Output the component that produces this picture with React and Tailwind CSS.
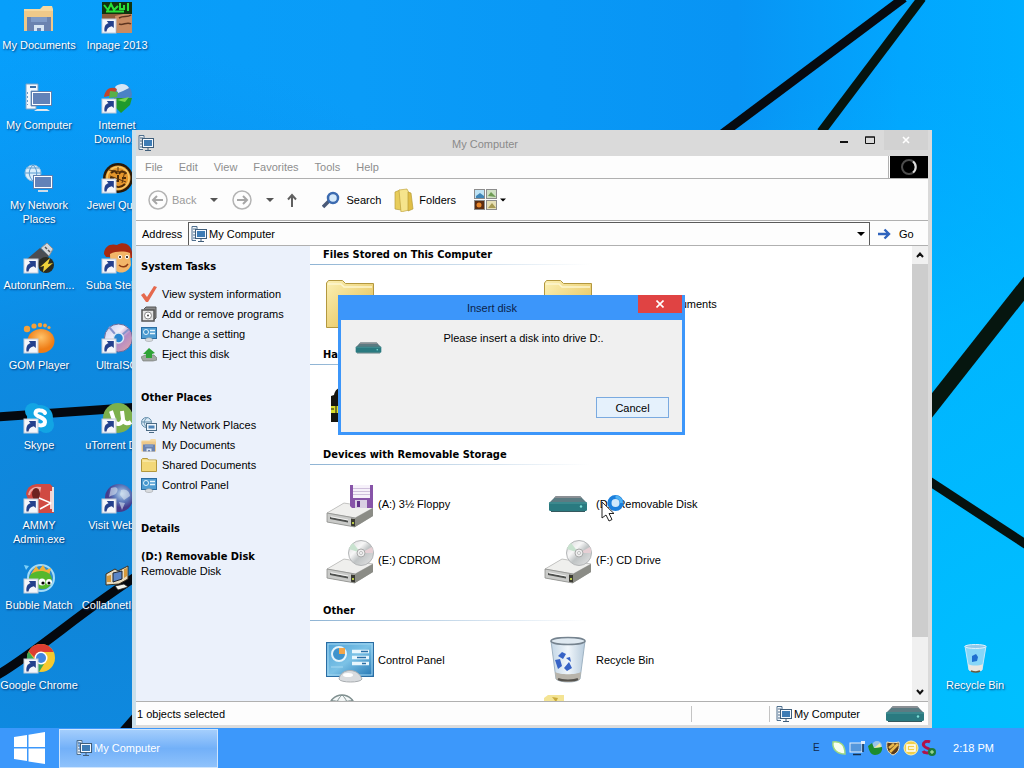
import React from "react";

const UI = "font-['Liberation_Sans',Arial,sans-serif]";
const BOLD = "font-['DejaVu_Sans_Condensed','DejaVu_Sans',sans-serif] font-bold";

/* ---------- shared drawings ---------- */

function Shortcut() {
  return (
    <g>
      <rect x="1" y="17" width="14" height="14" fill="#f4f6fa" stroke="#c3cbd8" strokeWidth="1" />
      <path d="M3.500 29.500c-.6-5 1-7.600 4-8.300l-1.700-2.200h7v7l-2-1.700c-3.300.6-4.800 2.200-5.300 5.200z" fill="#23408c" />
    </g>
  );
}

function ComputerIcon({ className }) {
  return (
    <svg viewBox="0 0 16 16" className={className} aria-hidden="true">
      <path d="M1 .5h5v3M1 .5v14h4" fill="#eef4fa" stroke="#4f6f8d" strokeWidth="1" />
      <path d="M2 3h3M2 6h2M2 9h2M2 12h2" stroke="#4f6f8d" strokeWidth="1" />
      <rect x="4.500" y="3.500" width="11" height="9" fill="#f4f9ff" stroke="#3f5d79" />
      <rect x="6" y="5" width="8" height="6" fill="#3e7cb5" />
      <path d="M10 13v2M7 15.500h6" stroke="#3f5d79" />
    </svg>
  );
}

function DesktopComputer() {
  return (
    <svg viewBox="0 0 32 32" className="size-8" aria-hidden="true">
      <path d="M3 2h12v7H8v15h5v3H3z" fill="#f3f8fd" stroke="#7aa2c8" strokeWidth="1" />
      <path d="M7 5h6" stroke="#3a6ea5" strokeWidth="2" />
      <path d="M4.500 10v13" stroke="#6d9cc9" strokeWidth="1" strokeDasharray="2 2" />
      <path d="M14 27h10l3 2H11z" fill="#dfe7ee" />
      <rect x="8" y="9" width="21" height="15" fill="#5d7fb0" />
      <rect x="9.500" y="10.500" width="18" height="12" fill="#6282b8" stroke="#fff" />
    </svg>
  );
}

function DesktopNetwork() {
  return (
    <svg viewBox="0 0 32 32" className="size-8" aria-hidden="true">
      <circle cx="10" cy="11" r="8" fill="#d8eefc" stroke="#8fbde0" />
      <path d="M2 11h16M10 3c-5 5-5 11 0 16M10 3c5 5 5 11 0 16M4 6h12" fill="none" stroke="#5a9bd0" />
      <rect x="10" y="13" width="20" height="14" fill="#5d7fb0" />
      <rect x="11.500" y="14.500" width="17" height="11" fill="#6282b8" stroke="#fff" />
      <path d="M15 29h10" stroke="#cddbe7" strokeWidth="2" />
    </svg>
  );
}

function DocsIcon({ className }) {
  return (
    <svg viewBox="0 0 32 32" className={className} aria-hidden="true">
      <path d="M1 7h16l3-3h9l1 3v6H1z" fill="#f6d9a0" />
      <path d="M1 9h29v20H1z" fill="#eec98a" />
      <path d="M4 15h24v14H4z" fill="#6b83b0" />
      <path d="M8 15h16v5H8z" fill="#7f9ac6" />
      <path d="M11 23h10v6h-3v-3h-4v3h-3z" fill="#d8e6f4" />
    </svg>
  );
}

function FolderIcon({ className }) {
  return (
    <svg viewBox="0 0 48 48" className={className} aria-hidden="true">
      <defs>
        <linearGradient id="folder" x1="0" y1="0" x2="1" y2="1">
          <stop offset="0" stopColor="#fbf0b4" />
          <stop offset="1" stopColor="#e2bb4c" />
        </linearGradient>
      </defs>
      <path d="M.5 47.500V3l2-2.500h14l3 3H47.500v44z" fill="url(#folder)" stroke="#b3983f" />
      <path d="M2 4h13l3 3h28" fill="none" stroke="#fdf6d0" strokeWidth="1.500" />
    </svg>
  );
}

function ControlPanelIcon({ className }) {
  return (
    <svg viewBox="0 0 48 48" className={className} aria-hidden="true">
      <defs>
        <linearGradient id="cpl" x1="0" y1="0" x2="1" y2="1">
          <stop offset="0" stopColor="#4fa3d8" />
          <stop offset=".5" stopColor="#7cc2e6" />
          <stop offset="1" stopColor="#2376b4" />
        </linearGradient>
      </defs>
      <rect x=".5" y="6.500" width="47" height="34" fill="url(#cpl)" stroke="#2a6da3" />
      <rect x="2" y="8" width="44" height="31" fill="none" stroke="#a6d8f2" />
      <circle cx="13" cy="18" r="7" fill="#3f93cc" stroke="#e3f4fc" strokeWidth="2" />
      <path d="M13 18v-6h6v6z" fill="#f3a548" />
      <path d="M26 15.500h17M26 21.500h17M26 27.500h17" stroke="#e8f6fd" strokeWidth="3.500" />
      <path d="M35 15.500h7M31 21.500h9M36 27.500h4" stroke="#2b6ea6" strokeWidth="1.500" />
      <path d="M5 31h12" stroke="#a6d8f2" />
      <path d="M13 43c1-5 5-8.500 11-8.500S34 38 36 43c-1 4-22 4-23 0z" fill="#d9dcdf" stroke="#a9adb1" />
      <ellipse cx="22" cy="39" rx="5" ry="2" fill="#fff" />
    </svg>
  );
}

function DriveBase() {
  return (
    <g>
      <path d="M1 33 18 23l29 5v8L29 47 1 42z" fill="#a9aaa7" />
      <path d="M1 33 18 23l29 5-18 10z" fill="#efefed" stroke="#bdbdbb" strokeWidth=".8" />
      <path d="M1 33l28 5v9L1 42z" fill="#c9cac8" stroke="#8d8e8b" strokeWidth=".8" />
      <path d="M29 38l18-10v8L29 47z" fill="#8b8c86" />
      <path d="M25 38.500l4 .6v7.400l-4-.8z" fill="#3b3b33" />
      <path d="M4 37l18 3.400v2L4 39z" fill="#4e504e" />
      <path d="M5 36.800l17 3.200" stroke="#fff" strokeWidth=".8" />
      <rect x="26" y="42" width="2" height="2" fill="#b8c84a" />
    </g>
  );
}

function FloppyDriveIcon() {
  return (
    <svg viewBox="0 0 48 48" className="size-12" aria-hidden="true">
      <DriveBase />
      <path d="M24 5h23v23H26l-2-2z" fill="#8754a8" />
      <rect x="27" y="5" width="17" height="13" fill="#f6f1fa" />
      <path d="M27 8.500h17M27 11.500h17M27 14.500h17" stroke="#cfc0dc" />
      <rect x="29" y="20" width="12" height="8" fill="#d9cfe3" />
      <rect x="31" y="21" width="3" height="6" fill="#63348a" />
    </svg>
  );
}

function DiscDriveIcon() {
  return (
    <svg viewBox="0 0 48 48" className="size-12" aria-hidden="true">
      <defs>
        <linearGradient id="disc" x1="0" y1="0" x2="1" y2="1">
          <stop offset="0" stopColor="#d4d4d6" />
          <stop offset=".35" stopColor="#f7f7f7" />
          <stop offset=".55" stopColor="#bfc3c4" />
          <stop offset="1" stopColor="#e6e6e6" />
        </linearGradient>
      </defs>
      <DriveBase />
      <circle cx="35" cy="17" r="12.500" fill="url(#disc)" stroke="#b3b5b7" />
      <path d="M35 17l11-6a12 12 0 0 1 1 6z" fill="#e6cfd4" />
      <path d="M35 17l-12-4a12 12 0 0 1 4-6z" fill="#c8e2cf" />
      <circle cx="35" cy="17" r="4" fill="#eee" stroke="#a9a9a9" />
      <circle cx="35" cy="17" r="1.500" fill="#fff" stroke="#999" strokeWidth=".6" />
    </svg>
  );
}

function RemovableIcon({ className }) {
  return (
    <svg viewBox="0 0 40 18" className={className} aria-hidden="true">
      <path d="M1 8 8 1h24l7 7z" fill="#5b7b82" />
      <path d="M8 1h24l2 2H6z" fill="#8a8f94" />
      <rect x="1" y="7" width="38" height="9" rx="1.500" fill="#2a7a80" />
      <path d="M1 8h38" stroke="#4f989c" />
      <path d="M3 16.500h34" stroke="#35595e" />
      <circle cx="33" cy="11.500" r="1.200" fill="#7fe0d8" />
    </svg>
  );
}

function BinIcon({ className }) {
  return (
    <svg viewBox="0 0 48 48" className={className} aria-hidden="true">
      <defs>
        <linearGradient id="bin" x1="0" y1="0" x2="1" y2="0">
          <stop offset="0" stopColor="#c3d6e6" />
          <stop offset=".5" stopColor="#f0f6fb" />
          <stop offset="1" stopColor="#b7cbdc" />
        </linearGradient>
      </defs>
      <path d="M7 5l5 38c4 4 21 4 24 0l5-38z" fill="url(#bin)" stroke="#9fb3c3" />
      <path d="M11 36l1 7c4 4 21 4 24 0l1-7c-5 3-21 3-26 0z" fill="#b8b4ab" />
      <path d="M14 43c4 2 16 2 20 0" stroke="#55534e" strokeWidth="2" fill="none" />
      <ellipse cx="24" cy="5" rx="17" ry="3.500" fill="#dfe9f1" stroke="#75838f" strokeWidth="1.500" />
      <path d="M14 20l4-4 4 2-3 5zM11 24l5-1 2 7-4 3zM20 32l5-6 3 6-5 3z" fill="#3763c6" />
      <path d="M22 22l4-1 1 5z" fill="#3763c6" />
    </svg>
  );
}

function DesktopBin() {
  return (
    <svg viewBox="0 0 32 32" className="size-8" aria-hidden="true">
      <path d="M6 4l4 24c3 2 10 2 13 0l4-24z" fill="#a9dcf6" fillOpacity=".8" stroke="#c6e9fa" />
      <path d="M9 22l1 6c3 2 10 2 13 0l1-6c-4 2-11 2-15 0z" fill="#e9e6e0" />
      <path d="M12 29c3 1 7 1 9 0" stroke="#6b5a3c" strokeWidth="1.500" fill="none" />
      <ellipse cx="16.500" cy="4.500" rx="10.500" ry="2" fill="#8fc8ea" stroke="#dff2fc" />
      <path d="M13 14l4-2 2 3-1 4-5 1z" fill="#1f6fd0" />
    </svg>
  );
}

/* ---------- desktop icon drawings ---------- */

function AppIcon({ children }) {
  return (
    <svg viewBox="0 0 32 32" className="size-8" aria-hidden="true">
      {children}
      <Shortcut />
    </svg>
  );
}

const InpageIcon = () => (
  <AppIcon>
    <rect x="1" y="0" width="30" height="31" fill="#8d5a3a" />
    <path d="M14 14l17-4v21H16z" fill="#c98b62" />
    <path d="M18 16c5-3 8 0 12-3M18 22c4 2 8-3 12 0" stroke="#5e3520" strokeWidth="1.500" fill="none" />
    <rect x="1" y="0" width="30" height="12" fill="#12330f" />
    <path d="M3 3l4 5 3-6 3 6 4-4M19 1v6h4V3M27 1v8M5 9.500h18" stroke="#28e03a" strokeWidth="2" fill="none" />
  </AppIcon>
);
const IdmIcon = () => (
  <AppIcon>
    <circle cx="21" cy="12" r="10" fill="#4a82c6" />
    <path d="M14 5c5-5 12-3 14 1l-6 3-5 2z" fill="#d5e6f6" />
    <path d="M3 15C4 7 10 4 16 7l-3 6z" fill="#c2452d" />
    <path d="M9 9l8 1-1 5-8 1z" fill="#58b04a" />
    <path d="M13 16h18l-2 7-9 8-7-7z" fill="#1f9a2c" />
    <path d="M16 18l12-3-4 5z" fill="#7bd44f" />
  </AppIcon>
);
const JewelIcon = () => (
  <AppIcon>
    <circle cx="17" cy="16" r="15" fill="#2a1a08" />
    <circle cx="17" cy="16" r="12.500" fill="#e5962c" />
    <circle cx="17" cy="16" r="11" fill="none" stroke="#f7c866" strokeWidth="1.500" />
    <path d="M10 11c3-3 5-2 6 1M18 12c2-4 5-3 7 0M17 13v6h-3M11 22c4 4 9 4 13 0M9 16h4M21 16h4" stroke="#4b2a0a" strokeWidth="2" fill="none" />
    <path d="M8 8l18 3M17 5v6M24 9l-3 12M9 14l16 6" stroke="#5d360d" strokeWidth="1" fill="none" />
  </AppIcon>
);
const AutorunIcon = () => (
  <AppIcon>
    <path d="M4 17 17 6l9 8-12 12z" fill="#4b4d52" />
    <path d="M18 6l6-5 6 6-4 7z" fill="#d4d8dc" stroke="#8d9196" />
    <path d="M22 5l2 2M25 8l2 2" stroke="#555" strokeWidth="1.500" />
    <circle cx="23" cy="23" r="8" fill="#2b2b20" />
    <path d="M17 25l10-9-2 6 5-1-10 9 1-6z" fill="#f0d33a" />
  </AppIcon>
);
const SubaIcon = () => (
  <AppIcon>
    <path d="M3 12C3 4 10 1 16 3c6-4 14-1 15 7v6L5 15z" fill="#a62a12" />
    <path d="M9 12c6-3 14-3 20-1l1 12c-2 6-8 9-13 7-5-2-8-8-8-18z" fill="#f3b668" />
    <circle cx="19" cy="15" r="2" fill="#fff" />
    <circle cx="26" cy="15" r="2" fill="#fff" />
    <circle cx="19" cy="15" r="1" />
    <circle cx="26" cy="15" r="1" />
    <path d="M18 23c3 3 7 2 9-1" stroke="#8d3a12" strokeWidth="1.500" fill="none" />
  </AppIcon>
);
const GomIcon = () => (
  <AppIcon>
    <defs>
      <radialGradient id="gom" cx=".5" cy=".35">
        <stop offset="0" stopColor="#ffc36a" />
        <stop offset="1" stopColor="#ef7d16" />
      </radialGradient>
    </defs>
    <ellipse cx="18" cy="19" rx="13.500" ry="12" fill="url(#gom)" />
    <circle cx="4" cy="7" r="3.200" fill="#f5a13a" />
    <circle cx="11" cy="4" r="2.600" fill="#f5a13a" />
    <circle cx="17" cy="3" r="2.200" fill="#f5a13a" />
    <circle cx="22" cy="3.500" r="1.900" fill="#f5a13a" />
    <circle cx="26" cy="5.500" r="1.600" fill="#f5a13a" />
  </AppIcon>
);
const UltraIcon = () => (
  <AppIcon>
    <defs>
      <linearGradient id="uiso" x1="0" y1="0" x2="1" y2="1">
        <stop offset="0" stopColor="#b9c8f0" />
        <stop offset=".4" stopColor="#f4eef8" />
        <stop offset=".6" stopColor="#b48bc4" />
        <stop offset="1" stopColor="#e4a9a9" />
      </linearGradient>
    </defs>
    <circle cx="17.500" cy="16" r="14" fill="url(#uiso)" stroke="#6a6c9a" />
    <path d="M17.500 16 8 5M17.500 16 28 7" stroke="#8694cc" strokeWidth="2" />
    <circle cx="17.500" cy="16" r="5" fill="#2a86d0" stroke="#dce8f4" strokeWidth="1.500" />
  </AppIcon>
);
const SkypeIcon = () => (
  <AppIcon>
    <circle cx="17" cy="16" r="13" fill="#12a5e4" />
    <circle cx="10" cy="9" r="8" fill="#12a5e4" />
    <circle cx="23" cy="23" r="8" fill="#12a5e4" />
    <path d="M22 11c-1-3-9-4-9.500 0S22.500 15 22 20s-9 4-10 0" stroke="#fff" strokeWidth="4" fill="none" strokeLinecap="round" />
  </AppIcon>
);
const TorrentIcon = () => (
  <AppIcon>
    <circle cx="17" cy="16" r="15" fill="#7db04c" />
    <path d="M10 9l3 9c2 6 8 5 9-1l-1-8M22 18c2 4 5 4 8 2" stroke="#fff" strokeWidth="4" fill="none" />
  </AppIcon>
);
const AmmyIcon = () => (
  <AppIcon>
    <path d="M3 12C4 4 10 2 16 2h11l4 4v25H10z" fill="#d04a42" />
    <path d="M6 13c1-6 6-8 11-7l-2 10" fill="none" stroke="#f0aaa4" strokeWidth="2" />
    <ellipse cx="13" cy="12" rx="4" ry="6" fill="#6e2320" />
    <path d="M16 16l12 5-11 6M28 9v18" stroke="#fff" strokeWidth="1.500" fill="none" />
    <path d="M30 5v25" stroke="#e9dede" strokeWidth="2" />
  </AppIcon>
);
const GlobeIcon = () => (
  <AppIcon>
    <defs>
      <radialGradient id="globe" cx=".6" cy=".35">
        <stop offset="0" stopColor="#b8d6ee" />
        <stop offset=".6" stopColor="#5a76b8" />
        <stop offset="1" stopColor="#453c8c" />
      </radialGradient>
    </defs>
    <circle cx="18" cy="16" r="14" fill="url(#globe)" />
    <path d="M10 6c5-2 8 0 6 4s-6 3-8 5zM20 8c5-2 9 2 9 6l-6 4-4-5zM18 20l6 1-3 7z" fill="#dbe4f0" opacity=".6" />
  </AppIcon>
);
const BubbleIcon = () => (
  <AppIcon>
    <circle cx="18" cy="16" r="13" fill="#2f8dd0" stroke="#a4dbf7" strokeWidth="2" />
    <path d="M8 12l5-8 3 4 4-5 3 5 5-2-2 8z" fill="#f2b23a" />
    <path d="M6 17c0-9 18-11 22-3 3 7-2 13-8 13S6 24 6 17z" fill="#54b82c" />
    <circle cx="19" cy="20" r="3.500" fill="#fff" />
    <circle cx="26" cy="20" r="3" fill="#fff" />
    <circle cx="20" cy="21" r="1.600" />
    <circle cx="26" cy="21" r="1.500" />
    <path d="M1 3l5 1-3 4z" fill="#7fd0f8" />
  </AppIcon>
);
const CollabIcon = () => (
  <svg viewBox="0 0 32 32" className="size-8" aria-hidden="true">
    <path d="M5 12l9-5 3 2 10-5v13l-9 5-13 1z" fill="#e8dcc0" stroke="#3a2f1e" />
    <path d="M12 11l9-2v8l-9 3z" fill="#5b86c8" stroke="#1e2430" />
    <path d="M6 14l4-1v7H6zM23 7l3-1v8l-3 2z" fill="#d69a3c" />
    <path d="M14 24l9-2 4 3-10 3z" fill="#f4f4ec" stroke="#222" strokeWidth=".8" />
  </svg>
);
const ChromeIcon = () => (
  <AppIcon>
    <circle cx="18" cy="16" r="14" fill="#f6c92f" />
    <path d="M5.500 9.500A14 14 0 0 1 30.500 10H18c-4 0-6 3-6 6z" fill="#dc3d32" />
    <path d="M5.500 9.500A14 14 0 0 0 16 30l5-8c-4 1-7 0-9-4z" fill="#3aa757" />
    <circle cx="18" cy="16" r="6.500" fill="#fff" />
    <circle cx="18" cy="16" r="5" fill="#4186e0" />
  </AppIcon>
);

/* ---------- desktop ---------- */

const desktopItems = [
  ["My Documents", <DocsIcon className="size-8" />],
  ["Inpage 2013", <InpageIcon />],
  ["My Computer", <DesktopComputer />],
  ["Internet\nDownlo...", <IdmIcon />],
  ["My Network\nPlaces", <DesktopNetwork />],
  ["Jewel Quest", <JewelIcon />],
  ["AutorunRem...", <AutorunIcon />],
  ["Suba Stella..", <SubaIcon />],
  ["GOM Player", <GomIcon />],
  ["UltraISO", <UltraIcon />],
  ["Skype", <SkypeIcon />],
  ["uTorrent Do..", <TorrentIcon />],
  ["AMMY\nAdmin.exe", <AmmyIcon />],
  ["Visit Webs..", <GlobeIcon />],
  ["Bubble Match", <BubbleIcon />],
  ["CollabnetIns...", <CollabIcon />],
  ["Google Chrome", <ChromeIcon />],
];

function DesktopButton({ label, icon }) {
  return (
    <button type="button" className="flex flex-col items-center gap-1 pt-0.5">
      {icon}
      <span className="text-center whitespace-pre text-white [text-shadow:1px_1px_2px_#00306b]">{label}</span>
    </button>
  );
}

function Wallpaper() {
  return (
    <svg
      viewBox="0 0 1024 728"
      preserveAspectRatio="none"
      className="absolute inset-0 size-full"
      aria-hidden="true"
    >
      <defs>
        <linearGradient id="sky" x1="0" y1="0" x2="1" y2="0">
          <stop offset="0" stopColor="#079ffb" />
          <stop offset=".35" stopColor="#0a9cf8" />
          <stop offset=".72" stopColor="#0894f4" />
          <stop offset=".88" stopColor="#02a6fe" />
          <stop offset="1" stopColor="#00aeff" />
        </linearGradient>
        <radialGradient id="deep" gradientUnits="userSpaceOnUse" cx="90" cy="560" r="520">
          <stop offset="0" stopColor="#1084d6" stopOpacity="1" />
          <stop offset=".4" stopColor="#0f86dc" stopOpacity=".85" />
          <stop offset="1" stopColor="#0b90ee" stopOpacity="0" />
        </radialGradient>
        <radialGradient id="cyan" gradientUnits="userSpaceOnUse" cx="1024" cy="700" r="640">
          <stop offset="0" stopColor="#00bfff" stopOpacity="1" />
          <stop offset=".6" stopColor="#00b8ff" stopOpacity=".8" />
          <stop offset="1" stopColor="#00b0ff" stopOpacity="0" />
        </radialGradient>
      </defs>
      <path d="M0 0h1024v728H0z" fill="url(#sky)" />
      <path d="M0 0h1024v728H0z" fill="url(#deep)" />
      <path d="M0 0h1024v728H0z" fill="url(#cyan)" />
      <path d="M904-2 722 134" stroke="#060a10" strokeWidth="9" />
      <path d="M922-2 821 132" stroke="#06140f" strokeWidth="9" />
      <path d="M1030 281 926 413" stroke="#06160f" strokeWidth="15" />
      <path d="M926 479l104 68" stroke="#06120f" strokeWidth="9" />
      <path d="M-4 417 140 407" stroke="#04080e" strokeWidth="9" />
      <path d="M-4 676C40 650 80 612 140 574" stroke="#04080e" strokeWidth="9" fill="none" />
      <path d="M121 734 142 710" stroke="#04080e" strokeWidth="9" />
    </svg>
  );
}

/* ---------- explorer window ---------- */

const Caret = ({ className }) => (
  <svg viewBox="0 0 8 4" className={className} aria-hidden="true">
    <path d="M0 0h8L4 4z" fill="currentColor" />
  </svg>
);

function TitleBar() {
  return (
    <header className="flex h-[26px] shrink-0 items-center bg-[#dadada] pl-0.5 text-[#8a8a8a]">
      <ComputerIcon className="size-4" />
      <h1 className="flex-1 pt-0.5 pr-4 text-center">My Computer</h1>
      <div className="flex h-full items-start">
        <button type="button" aria-label="Minimize" className="flex h-5 w-6 items-center justify-center">
          <svg viewBox="0 0 8 8" className="size-2"><path d="M0 5h8v2H0z" fill="#111" /></svg>
        </button>
        <button type="button" aria-label="Maximize" className="flex h-5 w-7 items-center justify-center">
          <svg viewBox="0 0 10 8" className="h-2 w-2.5"><path d="M.5 1h9v6.500h-9zM0 1h10" fill="none" stroke="#111" /></svg>
        </button>
        <button type="button" aria-label="Close" className="flex h-5 w-11 items-center justify-center bg-[#d2d2d2]">
          <svg viewBox="0 0 8 8" className="size-2"><path d="M1 1l6 6M7 1 1 7" stroke="#fff" strokeWidth="1.600" /></svg>
        </button>
      </div>
    </header>
  );
}

function MenuBar() {
  return (
    <div className="flex h-[23px] shrink-0 border-b border-[#b0b0b0]">
      <nav className="flex flex-1 items-center gap-4 border-r border-[#b0b0b0] pl-[9px] text-[#8e8e8e]">
        {["File", "Edit", "View", "Favorites", "Tools", "Help"].map((m) => (
          <button key={m} type="button">{m}</button>
        ))}
      </nav>
      <div className="ml-px flex w-[38px] items-center justify-center bg-black">
        <svg viewBox="0 0 18 18" className="size-[18px]" aria-hidden="true">
          <circle cx="9" cy="9" r="7" fill="none" stroke="#4d4d4d" strokeWidth="2" />
          <path d="M13 3.500a7 7 0 0 1 0 11" fill="none" stroke="#ddd" strokeWidth="2" />
        </svg>
      </div>
    </div>
  );
}

const NavArrow = ({ flip }) => (
  <svg viewBox="0 0 20 20" className="size-5" aria-hidden="true">
    <circle cx="10" cy="10" r="9" fill="none" stroke="#b4b4b4" strokeWidth="1.500" />
    <path
      d={flip ? "M5 10h10M11 6l4 4-4 4" : "M15 10H5M9 6l-4 4 4 4"}
      fill="none"
      stroke="#a6a6a6"
      strokeWidth="2"
    />
  </svg>
);

function Toolbar() {
  return (
    <div className="flex h-[42px] shrink-0 items-center border-b border-[#b0b0b0] pl-3">
      <button type="button" className="flex items-center gap-1 text-[#9a9a9a]">
        <NavArrow />
        Back
      </button>
      <button type="button" aria-label="Back history" className="ml-3.5 text-[#555]">
        <Caret className="h-1 w-2" />
      </button>
      <button type="button" aria-label="Forward" className="ml-3.5">
        <NavArrow flip />
      </button>
      <button type="button" aria-label="Forward history" className="ml-3.5 text-[#555]">
        <Caret className="h-1 w-2" />
      </button>
      <button type="button" aria-label="Up" className="ml-3">
        <svg viewBox="0 0 12 14" className="h-3.5 w-3"><path d="M6 14V2M2 6.500l4-4.500 4 4.500" fill="none" stroke="#606060" strokeWidth="2" /></svg>
      </button>
      <button type="button" className="ml-6 flex items-center gap-1.5">
        <svg viewBox="0 0 18 18" className="size-[18px]" aria-hidden="true">
          <path d="M7 10l-6 6" stroke="#4a5a78" strokeWidth="3.500" />
          <circle cx="11" cy="7" r="5" fill="#d5e9fa" stroke="#3c6bb0" strokeWidth="2.500" />
        </svg>
        Search
      </button>
      <button type="button" className="ml-3 flex items-center gap-1">
        <svg viewBox="0 0 22 24" className="h-6 w-[22px]" aria-hidden="true">
          <path d="M2 4l5-2 1 20-6-1z" fill="#e8cd5c" stroke="#b89d3a" strokeWidth=".7" />
          <path d="M6 2l8-1 2 4v17l-8 2z" fill="#f5e48c" stroke="#c3a640" strokeWidth=".7" />
          <path d="M15 4l3 1 2 16-5 2z" fill="#e0be46" stroke="#b89d3a" strokeWidth=".7" />
        </svg>
        Folders
      </button>
      <button type="button" aria-label="Views" className="ml-[18px] flex items-center gap-0.5">
        <svg viewBox="0 0 24 22" className="h-[22px] w-6" aria-hidden="true">
          <g stroke="#8c8c8c">
            <rect x=".5" y=".5" width="10" height="9" fill="#bfe3f4" />
            <rect x="12.500" y=".5" width="10" height="9" fill="#cfe0c4" />
            <rect x=".5" y="11.500" width="10" height="9" fill="#5b2d12" />
            <rect x="12.500" y="11.500" width="10" height="9" fill="#e6dfb6" />
          </g>
          <path d="M2 7l4-3 4 3v2H2z" fill="#3f86b8" />
          <path d="M14 7l3-4 5 5z" fill="#6f9c54" />
          <circle cx="5" cy="16" r="2.500" fill="#e8862a" />
          <path d="M14 19l4-5 4 5z" fill="#a69a52" />
        </svg>
        <Caret className="h-1 w-1.5" />
      </button>
    </div>
  );
}

function AddressBar() {
  return (
    <div className="flex h-[25px] shrink-0 items-stretch border-b border-[#b0b0b0] pt-px">
      <label htmlFor="address" className="flex w-[52px] items-center pl-1.5">Address</label>
      <div className="flex flex-1 items-center gap-0.5 border-t border-r border-l border-[#5a5a5a] pr-1 pl-0.5">
        <ComputerIcon className="size-4" />
        <input id="address" defaultValue="My Computer" className="h-full min-w-0 flex-1 outline-none" />
        <button type="button" aria-label="Show addresses"><Caret className="h-1 w-2" /></button>
      </div>
      <button type="button" className="flex w-[58px] items-center gap-2 pl-2">
        <svg viewBox="0 0 13 12" className="h-3 w-[13px]" aria-hidden="true">
          <path d="M0 6h10M6.500 1.500 11 6l-4.500 4.500" fill="none" stroke="#2f63bd" strokeWidth="2.400" />
        </svg>
        Go
      </button>
    </div>
  );
}

const CheckIcon = () => (
  <svg viewBox="0 0 16 16" className="size-4" aria-hidden="true">
    <path d="M0 9l3-2 3 4L13 0l3 1L7 16H5z" fill="#e5694e" />
  </svg>
);
const ProgramsIcon = () => (
  <svg viewBox="0 0 16 16" className="size-4" aria-hidden="true">
    <path d="M3 3l2-2h10v11l-2 2" fill="#8a8a8a" stroke="#555" />
    <rect x="1" y="4" width="12" height="11" fill="#e4e4e4" stroke="#555" strokeWidth="1.500" />
    <circle cx="7" cy="9.500" r="3.500" fill="#fff" stroke="#888" />
    <circle cx="7" cy="9.500" r="1" fill="#444" />
  </svg>
);
const SettingIcon = () => (
  <svg viewBox="0 0 16 16" className="size-4" aria-hidden="true">
    <rect x=".5" y="1.500" width="15" height="11" fill="#4f9dd2" stroke="#2a6da3" />
    <circle cx="5" cy="6" r="2.500" fill="#3f93cc" stroke="#e3f4fc" />
    <path d="M9 4.500h5M9 7.500h5" stroke="#e8f6fd" strokeWidth="1.500" />
    <path d="M4 14c1-3 7-3 8 0-1 2-7 2-8 0z" fill="#d9dcdf" stroke="#a0a4a8" strokeWidth=".6" />
  </svg>
);
const EjectIcon = () => (
  <svg viewBox="0 0 16 16" className="size-4" aria-hidden="true">
    <path d="M0 11l4-2h9l3 3v2l-4 1H2z" fill="#a3a8a3" stroke="#6c706c" strokeWidth=".6" />
    <path d="M2 8l6-6 6 5-3 1v4H5V8z" fill="#2fa336" />
  </svg>
);
const NetworkSmall = () => (
  <svg viewBox="0 0 16 16" className="size-4" aria-hidden="true">
    <circle cx="5.500" cy="5.500" r="5" fill="#dcebf6" stroke="#5f8aa8" />
    <path d="M1 5h9M5.500 1c-3 3-3 6 0 9" fill="none" stroke="#5f8aa8" />
    <rect x="5.500" y="6.500" width="10" height="7" fill="#eef5fb" stroke="#4a6a84" />
    <rect x="7.500" y="8.500" width="6" height="3" fill="#4c84b8" />
    <path d="M8 15.500h5" stroke="#4a6a84" />
  </svg>
);
const SmallFolder = () => (
  <svg viewBox="0 0 16 16" className="size-4" aria-hidden="true">
    <path d="M.5 14.500v-12l1-1h5l1 1.500h8v11.500z" fill="#f3d878" stroke="#b3983f" />
    <path d="M1.500 4h13" stroke="#fdf3c4" />
  </svg>
);

function TaskGroup({ title, items }) {
  return (
    <section>
      <h2 className={BOLD}>{title}</h2>
      <ul className="pt-2.5">
        {items.map(([label, icon]) => (
          <li key={label} className="flex h-5 items-center">
            <a href="#" className="flex items-center gap-[5px]">
              {icon}
              {label}
            </a>
          </li>
        ))}
      </ul>
    </section>
  );
}

function Sidebar() {
  return (
    <aside className="flex w-[174px] shrink-0 flex-col gap-[27px] bg-[#ebf1fb] pt-[14px] pl-[5px]">
      <TaskGroup
        title="System Tasks"
        items={[
          ["View system information", <CheckIcon />],
          ["Add or remove programs", <ProgramsIcon />],
          ["Change a setting", <SettingIcon />],
          ["Eject this disk", <EjectIcon />],
        ]}
      />
      <TaskGroup
        title="Other Places"
        items={[
          ["My Network Places", <NetworkSmall />],
          ["My Documents", <DocsIcon className="size-4" />],
          ["Shared Documents", <SmallFolder />],
          ["Control Panel", <SettingIcon />],
        ]}
      />
      <section>
        <h2 className={BOLD}>Details</h2>
        <p className={`pt-3.5 ${BOLD}`}>(D:) Removable Disk</p>
        <p>Removable Disk</p>
      </section>
    </aside>
  );
}

const HardDisk = () => (
  <svg viewBox="0 0 48 48" className="size-12" aria-hidden="true">
    <path d="M5 42V16l3-1c1-5 4-8 10-8h22v35z" fill="#15150f" />
    <path d="M5 26h20v7H5z" fill="#d8dc2a" />
    <path d="M5 29h3M10 20v22" stroke="#15150f" />
  </svg>
);

const GlobeOutline = () => (
  <svg viewBox="0 0 48 48" className="size-12" aria-hidden="true">
    <ellipse cx="16" cy="16" rx="13" ry="13" fill="#f5f8f8" stroke="#809090" strokeWidth="1.500" />
    <path d="M3 16h26M5 8c6 2 16 2 22 0M16 3c-8 7-8 19 0 26M16 3c8 7 8 19 0 26" fill="none" stroke="#809090" />
  </svg>
);

const TopFolder = () => (
  <svg viewBox="0 0 48 48" className="size-12" aria-hidden="true">
    <path d="M0 6l4-3h16v45H0z" fill="#f4e494" />
    <path d="M8 5l6 1-2 4z" fill="#c9a93a" />
  </svg>
);

const groups = [
  ["Files Stored on This Computer", [
    ["Shared Documents", <FolderIcon className="size-12" />],
    ["Computer1's Documents", <FolderIcon className="size-12" />],
  ]],
  ["Hard Disk Drives", [["Local Disk (C:)", <HardDisk />]]],
  ["Devices with Removable Storage", [
    ["(A:) 3½ Floppy", <FloppyDriveIcon />],
    ["(D:) Removable Disk", <span className="flex w-12 justify-center"><RemovableIcon className="h-[18px] w-10" /></span>],
    ["(E:) CDROM", <DiscDriveIcon />],
    ["(F:) CD Drive", <DiscDriveIcon />],
  ]],
  ["Other", [
    ["Control Panel", <ControlPanelIcon className="size-12" />],
    ["Recycle Bin", <BinIcon className="size-12" />],
    ["", <GlobeOutline />],
    ["", <TopFolder />],
  ]],
];

function FileView() {
  return (
    <div className="min-w-0 flex-1 overflow-hidden bg-white">
      {groups.map(([title, items]) => (
        <section key={title}>
          <h2 className={`flex h-[18px] items-center pl-[13px] ${BOLD}`}>{title}</h2>
          <div className="h-px w-[280px] bg-linear-to-r from-[#8fb4d4] to-white" />
          <div className="grid grid-cols-[218px_218px] gap-y-2 pt-[15px] pb-[18px] pl-4">
            {items.map(([label, icon], i) => (
              <button key={i} type="button" className="flex h-12 items-center gap-1 text-left whitespace-nowrap">
                {icon}
                {label}
              </button>
            ))}
          </div>
        </section>
      ))}
    </div>
  );
}

function ScrollRail() {
  return (
    <div className="flex w-4 shrink-0 flex-col bg-[#f0f0f0]">
      <button type="button" aria-label="Scroll up" className="flex h-[18px] items-center justify-center">
        <svg viewBox="0 0 8 6" className="h-1.5 w-2"><path d="M1 5l3-3.500L7 5" fill="none" stroke="#111" strokeWidth="2" /></svg>
      </button>
      <div className="flex-1">
        <div className="h-[89%] bg-[#cdcdcd]" />
      </div>
      <button type="button" aria-label="Scroll down" className="flex h-[18px] items-center justify-center">
        <svg viewBox="0 0 8 6" className="h-1.5 w-2"><path d="M1 1l3 3.500L7 1" fill="none" stroke="#111" strokeWidth="2" /></svg>
      </button>
    </div>
  );
}

function StatusBar() {
  return (
    <footer className="flex h-6 shrink-0 items-center border-t border-[#b0b0b0]">
      <p className="flex-1 pl-px">1 objects selected</p>
      <div className="h-4 w-[78px] border-l border-[#c4c4c4]" />
      <div className="flex h-4 w-[116px] items-center gap-0.5 border-l border-[#c4c4c4] pl-1.5">
        <ComputerIcon className="size-4" />
        My Computer
      </div>
      <RemovableIcon className="mr-[3px] h-[18px] w-10" />
    </footer>
  );
}

function ExplorerWindow() {
  return (
    <main className="absolute top-[130px] left-[132px] flex h-[598px] w-[800px] flex-col border-x-4 border-b-[3px] border-x-[#dadada] border-b-[#dcdcdc] border-l-[#c9dfeb] bg-[#fdfdfd]">
      <TitleBar />
      <MenuBar />
      <Toolbar />
      <AddressBar />
      <div className="flex min-h-0 flex-1">
        <Sidebar />
        <FileView />
        <ScrollRail />
      </div>
      <StatusBar />
    </main>
  );
}

function InsertDialog() {
  return (
    <div
      role="dialog"
      aria-labelledby="dialog-title"
      className="absolute top-[295px] left-[338px] flex h-[140px] w-[347px] flex-col border-x-[3px] border-b-[3px] border-[#3c96fa] bg-[#f0f0f0]"
    >
      <header className="flex h-[25px] items-start bg-[#3c96fa]">
        <h2 id="dialog-title" className="flex-1 pt-1.5 pl-[5px] text-center text-[#0b1f4a]">Insert disk</h2>
        <button type="button" aria-label="Close" className="flex h-[18px] w-11 items-center justify-center bg-[#e04343]">
          <svg viewBox="0 0 8 8" className="size-2"><path d="M.5.5l7 7M7.500.5l-7 7" stroke="#fff" strokeWidth="1.600" /></svg>
        </button>
      </header>
      <div className="flex flex-1 items-start pt-[11px] pl-3.5">
        <RemovableIcon className="mt-2.5 h-3.5 w-[27px]" />
        <p className="flex-1 pr-[17px] text-center">Please insert a disk into drive D:.</p>
      </div>
      <div className="flex justify-end pr-[13px] pb-3.5">
        <button type="button" className="h-[21px] w-[73px] border border-[#7aaae0] bg-[#e5f1fc]">Cancel</button>
      </div>
    </div>
  );
}

function BusyCursor() {
  return (
    <svg viewBox="0 0 24 28" className="pointer-events-none absolute top-[494px] left-[601px] h-7 w-6" aria-hidden="true">
      <path d="M1 8v16l4-3 3 6 3-1.500-3-6h5z" fill="#fff" stroke="#222" strokeWidth="1" />
      <circle cx="14.500" cy="9" r="6" fill="#cfe8fb" stroke="#1b7fdc" strokeWidth="4" />
      <path d="M14.500 3a6 6 0 0 1 6 6" fill="none" stroke="#4fb2f4" strokeWidth="3" />
    </svg>
  );
}

/* ---------- taskbar ---------- */

function Tray() {
  return (
    <div className="flex items-center gap-0.5">
      <span className="mr-2 w-2 text-[10px] text-[#12284a]">E</span>
      <svg viewBox="0 0 16 16" className="size-4"><path d="M2 2c8-1 12 3 12 12C7 14 1 10 2 2z" fill="#f6fff0" stroke="#9ed880" strokeWidth="1.500" /></svg>
      <svg viewBox="0 0 16 16" className="size-4">
        <rect x="1" y="3" width="12" height="9" fill="#5597dc" stroke="#e5effa" />
        <path d="M4 14.500h8M14 2v10" stroke="#16304e" strokeWidth="1.500" />
        <path d="M12 1h4v3h-4z" fill="#e5effa" />
      </svg>
      <svg viewBox="0 0 16 16" className="size-4">
        <circle cx="10" cy="6" r="5" fill="#9ac4e8" />
        <path d="M1 6l4-3 2 5 8-1c1 5-3 8-7 8S2 11 1 6z" fill="#1c8c2c" />
        <path d="M7 8l6-5 1 4z" fill="#f2e9a0" />
      </svg>
      <svg viewBox="0 0 16 16" className="size-4">
        <path d="M2 2c4 1 8 1 12 0 1 7-1 11-6 13C3 13 1 9 2 2z" fill="#5a3a18" stroke="#f2e4bd" />
        <path d="M5 12l8-8M4 8l5-4" stroke="#e8b84a" strokeWidth="2.500" />
      </svg>
      <svg viewBox="0 0 16 16" className="size-4">
        <circle cx="8" cy="8" r="7" fill="#f2d04a" stroke="#fff2b0" />
        <rect x="4" y="5" width="8" height="6" fill="none" stroke="#fff" strokeWidth="1.500" />
        <path d="M6 8h5" stroke="#fff" strokeWidth="1.500" />
      </svg>
      <svg viewBox="0 0 16 16" className="size-4">
        <path d="M9 2C5 0 1 3 3 6s7 2 6 5-6 2-7 0" fill="none" stroke="#b0134a" strokeWidth="3" />
        <circle cx="11" cy="12" r="4" fill="#1c7c3a" />
        <path d="M9 12h4M11 10v4" stroke="#bdf0b0" />
      </svg>
    </div>
  );
}

function Taskbar() {
  return (
    <footer className="relative flex h-10 shrink-0 items-center bg-[#3c98fb] pr-[30px] text-white">
      <button type="button" aria-label="Start" className="flex h-full w-[59px] items-center pl-[13px]">
        <svg viewBox="0 0 32 32" className="size-8" aria-hidden="true">
          <path d="M1 5l13-2v12H1zM15.500 2.700 32 0v15H15.500zM1 16.500h13V29L1 27zM15.500 16.500H32V32l-16.500-2.500z" fill="#fff" />
        </svg>
      </button>
      <button
        type="button"
        className="flex h-[39px] w-[159px] items-center gap-0.5 border border-[#cfe5fd] bg-linear-to-b from-[#a4cefc] via-[#72b0f8] to-[#8fc2fb] pl-4"
      >
        <ComputerIcon className="size-4" />
        My Computer
      </button>
      <div className="flex-1" />
      <Tray />
      <time className="ml-4 whitespace-nowrap">2:18 PM</time>
    </footer>
  );
}

export default function App() {
  return (
    <div className={`flex h-screen min-h-[768px] flex-col overflow-hidden text-[11px] leading-[14px] text-black ${UI}`}>
      <div className="relative flex-1">
        <Wallpaper />
        <div className="absolute top-0 left-0 grid auto-rows-[80px] grid-cols-[78px_78px]">
          {desktopItems.map(([label, icon]) => (
            <DesktopButton key={label} label={label} icon={icon} />
          ))}
        </div>
        <div className="absolute right-[10px] bottom-2 h-20 w-[78px] [&>button]:w-full">
          <DesktopButton label="Recycle Bin" icon={<DesktopBin />} />
        </div>
        <ExplorerWindow />
        <InsertDialog />
        <BusyCursor />
      </div>
      <Taskbar />
    </div>
  );
}
